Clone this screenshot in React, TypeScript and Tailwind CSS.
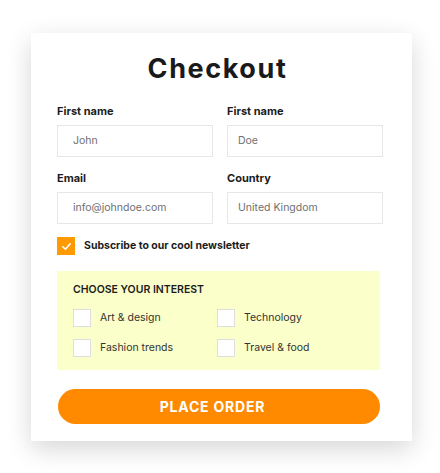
import * as React from 'react';

const interests = ['Art & design', 'Technology', 'Fashion trends', 'Travel & food'];

function Field({ label, value, inset }: { label: string; value: string; inset?: boolean }) {
  return (
    <div className="flex flex-col">
      <label className="text-[11px] font-bold leading-none text-[#1c1c1c]">{label}</label>
      <div
        className={
          'mt-[8px] flex h-[32px] items-center border border-[#e6e6e6] text-[10.5px] text-[#6f6f6f] ' +
          (inset ? 'pl-[10px]' : 'pl-[15px]')
        }
      >
        {value}
      </div>
    </div>
  );
}

export default function App() {
  return (
    <div
      className="h-[473px] w-[440px] bg-white pt-[33px] pl-[31px]"
      style={{ fontFamily: 'Inter, "Noto Sans", sans-serif' }}
    >
      <div className="w-[381px] bg-white pl-[26px] pr-[29px] pt-[21px] pb-[17px] shadow-[0_8px_24px_rgba(0,0,0,0.16)]">
        <h1 className="pr-[5px] text-center text-[27px] font-bold leading-[30px] tracking-[1.6px] text-[#1a1a1a]">
          Checkout
        </h1>

        <div className="mt-[22px] grid grid-cols-2 gap-x-[14px] gap-y-[16px]">
          <Field label="First name" value="John" />
          <Field label="First name" value="Doe" inset />
          <Field label="Email" value="info@johndoe.com" />
          <Field label="Country" value="United Kingdom" inset />
        </div>

        <div className="mt-[13px] flex items-center gap-[9px]">
          <span className="flex h-[18px] w-[18px] items-center justify-center bg-[#ff9a00]">
            <svg viewBox="0 0 12 12" className="h-[11px] w-[11px]" fill="none" stroke="white" strokeWidth="1.8" strokeLinecap="round" strokeLinejoin="round">
              <path d="M2 6.3 4.8 9 10 3" />
            </svg>
          </span>
          <span className="text-[10.5px] font-bold text-[#1c1c1c]">Subscribe to our cool newsletter</span>
        </div>

        <div className="mt-[16px] mr-[3px] bg-[#fbffc9] px-[16px] pt-[12px] pb-[13px]">
          <div className="text-[10.5px] font-semibold uppercase leading-[14px] text-[#1c1c1c]">Choose your interest</div>
          <div className="mt-[12px] grid grid-cols-[144px_1fr] gap-y-[12px]">
            {interests.map((item) => (
              <div key={item} className="flex items-center gap-[9px]">
                <span className="h-[18px] w-[18px] border border-[#dedede] bg-white" />
                <span className="text-[10.5px] text-[#333333]">{item}</span>
              </div>
            ))}
          </div>
        </div>

        <button
          type="button"
          className="mt-[19px] ml-[1px] mr-[3px] flex h-[35px] w-[322px] items-center justify-center rounded-full bg-[#ff8a00] pr-[13px] text-[14px] font-bold uppercase tracking-[0.8px] text-white"
        >
          Place order
        </button>
      </div>
    </div>
  );
}
